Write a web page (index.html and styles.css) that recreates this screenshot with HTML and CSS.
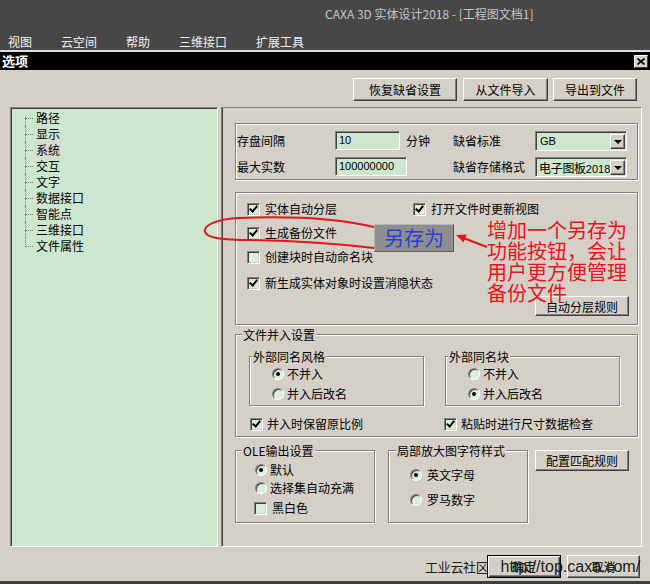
FILE: index.html
```html
<!DOCTYPE html>
<html lang="zh-CN">
<head>
<meta charset="utf-8">
<title>选项</title>
<link rel="stylesheet" href="styles.css">
</head>
<body>
<div class="screen">
  <header class="appbar">
    <div class="apptitle">CAXA 3D 实体设计2018 - [工程图文档1]</div>
    <nav class="menu"><span>视图</span><span>云空间</span><span>帮助</span><span>三维接口</span><span>扩展工具</span></nav>
  </header>

  <div class="dialog">
    <div class="dlg-title">
      <span class="dlg-name">选项</span>
      <span class="close-btn"><svg width="8" height="7" viewBox="0 0 8 7"><path d="M0.5 0.5 L7.5 6.5 M7.5 0.5 L0.5 6.5" stroke="#000" stroke-width="1.6" fill="none"/></svg></span>
    </div>
    <div class="dlg-body">
      <div class="toolbar">
        <button class="btn b-restore">恢复缺省设置</button>
        <button class="btn b-import">从文件导入</button>
        <button class="btn b-export">导出到文件</button>
      </div>

      <div class="main">
        <div class="tree">
          <ul class="tree-list">
            <li>路径</li>
            <li>显示</li>
            <li><span class="sel">系统</span></li>
            <li>交互</li>
            <li>文字</li>
            <li>数据接口</li>
            <li>智能点</li>
            <li>三维接口</li>
            <li>文件属性</li>
          </ul>
        </div>

        <div class="page">
          <div class="grp g-basic">
            <span>存盘间隔</span>
            <span class="field f-short">10</span>
            <span>分钟</span>
            <span>缺省标准</span>
            <span class="combo"><span class="combo-val latin">GB</span><span class="combo-arrow"></span></span>
            <span>最大实数</span>
            <span class="field f-long">100000000</span>
            <span></span>
            <span>缺省存储格式</span>
            <span class="combo"><span class="combo-val">电子图板<span class="digits">2018</span></span><span class="combo-arrow"></span></span>
          </div>

          <div class="grp g-checks">
            <div class="chk"><span class="box on"></span><span>实体自动分层</span></div>
            <div class="chk"><span class="box on"></span><span>打开文件时更新视图</span></div>
            <div class="chk span"><span class="box on"></span><span>生成备份文件</span></div>
            <div class="chk span"><span class="box"></span><span>创建块时自动命名块</span></div>
            <div class="chk span chk-last"><span class="box on"></span><span>新生成实体对象时设置消隐状态</span></div>
            <button class="btn btn-rule span">自动分层规则</button>
          </div>

          <div class="grp g-merge">
            <div class="lg">文件并入设置</div>
            <div class="subs">
              <div class="grp sub">
                <div class="lg">外部同名风格</div>
                <div class="opts">
                  <div class="rad"><span class="dot on"></span><span>不并入</span></div>
                  <div class="rad"><span class="dot"></span><span>并入后改名</span></div>
                </div>
              </div>
              <div class="grp sub">
                <div class="lg">外部同名块</div>
                <div class="opts">
                  <div class="rad"><span class="dot"></span><span>不并入</span></div>
                  <div class="rad"><span class="dot on"></span><span>并入后改名</span></div>
                </div>
              </div>
            </div>
            <div class="merge-checks">
              <div class="chk"><span class="box on"></span><span>并入时保留原比例</span></div>
              <div class="chk"><span class="box on"></span><span>粘贴时进行尺寸数据检查</span></div>
            </div>
          </div>

          <div class="bottom-row">
            <div class="grp g-ole">
              <div class="lg">OLE输出设置</div>
              <div class="opts">
                <div class="rad"><span class="dot on"></span><span>默认</span></div>
                <div class="rad"><span class="dot"></span><span>选择集自动充满</span></div>
                <div class="chk"><span class="box"></span><span>黑白色</span></div>
              </div>
            </div>
            <div class="grp g-zoom">
              <div class="lg">局部放大图字符样式</div>
              <div class="opts">
                <div class="rad"><span class="dot on"></span><span>英文字母</span></div>
                <div class="rad"><span class="dot"></span><span>罗马数字</span></div>
              </div>
            </div>
            <button class="btn btn-match">配置匹配规则</button>
          </div>
        </div>
      </div>

      <div class="footer">
        <button class="btn b-ok">确定</button>
        <button class="btn b-cancel">取消</button>
      </div>
    </div>
  </div>

  <svg class="note-marks" width="650" height="584" viewBox="0 0 650 584">
    <path d="M374 227 C340 219 290 216 240 218 C215 219 203 226 205 232 C207 238 222 240 250 240 C300 241 340 244 374 248" fill="none" stroke="#e3151c" stroke-width="2" stroke-linecap="round"/>
    <line x1="487" y1="247" x2="462" y2="237.5" stroke="#e3151c" stroke-width="2"/>
    <polygon points="456,235 466.7,234.4 463.6,242.6" fill="#e3151c"/>
  </svg>
  <div class="note-saveas">另存为</div>
  <div class="note-text">增加一个另存为<br>功能按钮，会让<br>用户更方便管理<br>备份文件</div>
  <div class="watermark"><span class="wm-cn">工业云社区</span><span class="wm-url">http://top.caxa.com/</span></div>
</div>
</body>
</html>
```

FILE: styles.css
```css
* { box-sizing: border-box; }
html, body { margin: 0; padding: 0; }
body {
  width: 650px;
  height: 584px;
  overflow: hidden;
  background: #d4d0c8;
  font-family: "Noto Sans CJK SC", "Noto Sans", sans-serif;
  font-size: 12px;
  line-height: 16px;
  color: #000;
}
.screen { position: relative; width: 650px; height: 584px; overflow: hidden; }

/* application bar */
.appbar { height: 50px; background: #474747; padding-top: 6px; }
.apptitle { height: 16px; padding-left: 325px; color: #c6c6c6; white-space: nowrap; }
.menu { display: flex; gap: 29px; margin-top: 12px; padding-left: 8px; color: #f2f2f2; }

/* dialog */
.dialog { border-top: 2px solid #dcdcdc; border-bottom: 3px solid #404040; }
.dlg-title {
  height: 18px; background: #000;
  display: flex; align-items: center; justify-content: space-between;
  padding: 0 2px;
}
.dlg-name { color: #fff; font-weight: 700; font-size: 13px; line-height: 18px; }
.close-btn {
  width: 14px; height: 13px; background: #d4d0c8;
  border: 1px solid; border-color: #fff #404040 #404040 #fff;
  display: flex; align-items: center; justify-content: center;
}
.dlg-body {
  height: 511px;
  padding: 8px 8px 3px 10px;
  display: flex; flex-direction: column;
}

/* buttons */
.btn {
  font: inherit; font-size: 12px; color: #000;
  background: #d4d0c8;
  border: 1px solid; border-color: #fff #404040 #404040 #fff;
  box-shadow: inset -1px -1px 0 #808080;
  padding: 0; height: 23px; line-height: 19px; text-align: center;
}
.toolbar { display: flex; justify-content: flex-end; gap: 5px; height: 23px; padding-right: 5px; }
.b-restore { width: 104px; margin-right: 1px; }
.b-import { width: 85px; }
.b-export { width: 84px; }

.main { display: flex; gap: 3px; height: 440px; margin-top: 6px; }

/* tree */
.tree {
  width: 208px; background: #cde7cf;
  border: 1px solid; border-color: #808080 #fff #fff #808080;
  box-shadow: inset 1px 1px 0 #404040;
}
.tree-list { list-style: none; margin: 0; padding: 2px 0 0 0; }
.tree-list li { position: relative; height: 16px; padding-left: 25px; white-space: nowrap; }
.tree-list li::before {
  content: ""; position: absolute; left: 14px; top: 8px; width: 8px;
  border-top: 1px dotted #7a7a7a;
}
.tree-list li::after {
  content: ""; position: absolute; left: 14px; top: 0; height: 16px;
  border-left: 1px dotted #7a7a7a;
}
.tree-list li:first-child::after { top: 7px; height: 9px; }
.tree-list li:last-child::after { height: 9px; }
.sel { background: #d9d9d2; padding: 0 1px; margin-left: -1px; }

/* property page */
.page {
  flex: 1;
  border: 1px solid; border-color: #808080 #fff #fff #808080;
  box-shadow: inset 1px 0 0 #404040;
  padding: 15px 3px 0 13px;
}
.grp { border: 1px solid #808080; box-shadow: inset 1px 1px 0 #fff, 1px 1px 0 #fff; }
.lg {
  width: max-content; height: 15px; line-height: 15px;
  margin: -8px 0 0 6px; padding: 0 1px;
  background: #d4d0c8; white-space: nowrap;
}

.g-basic {
  display: grid;
  grid-template-columns: 98px 71px 47px 82px 92px;
  grid-template-rows: 19px 19px;
  row-gap: 7px;
  align-items: center;
  padding: 7px 0 3px 1px;
  white-space: nowrap;
}
.field {
  height: 19px; background: #cde7cf;
  border: 1px solid; border-color: #808080 #fff #fff #808080;
  box-shadow: inset 1px 1px 0 #404040;
  font-family: "Liberation Sans", sans-serif; font-size: 11px; line-height: 17px;
  padding-left: 3px;
}
.f-short { width: 65px; }
.f-long { width: 72px; }
.combo {
  display: flex; height: 20px; width: 92px; background: #cde7cf;
  border: 1px solid; border-color: #808080 #fff #fff #808080;
  box-shadow: inset 1px 1px 0 #404040;
  padding: 2px 1px 1px 2px;
}
.combo-val { flex: 1; padding-left: 1px; line-height: 15px; white-space: nowrap; overflow: hidden; letter-spacing: -0.3px; }
.digits { font-family: "Liberation Sans", sans-serif; font-size: 11px; letter-spacing: 0; }
.latin { font-family: "Liberation Sans", sans-serif; font-size: 11px; letter-spacing: 0; padding-left: 2px; }
.combo-arrow {
  width: 15px; height: 15px; flex: none; background: #d4d0c8;
  border: 1px solid; border-color: #fff #404040 #404040 #fff;
  box-shadow: inset -1px -1px 0 #808080;
  display: flex; align-items: center; justify-content: center;
}
.combo-arrow::after {
  content: ""; border-left: 4px solid transparent; border-right: 4px solid transparent;
  border-top: 4px solid #000; margin-top: 1px;
}

/* check boxes & radios */
.chk, .rad { display: flex; align-items: center; height: 16px; white-space: nowrap; }
.chk { gap: 5px; }
.rad { gap: 3px; }
.box {
  width: 13px; height: 13px; flex: none; background: #dbeedb;
  border: 1px solid; border-color: #808080 #fff #fff #808080;
  box-shadow: inset 1px 1px 0 #404040, inset -1px -1px 0 #d4d0c8;
  display: flex; align-items: center; justify-content: center;
}
.box.on::after {
  content: ""; width: 3px; height: 6px;
  border: solid #000; border-width: 0 2px 2px 0;
  transform: rotate(40deg); margin-top: -2px;
}
.dot {
  width: 12px; height: 12px; flex: none; border-radius: 50%; background: #dbeedb;
  border: 1px solid; border-color: #808080 #fff #fff #808080;
  box-shadow: inset 1px 1px 0 #404040;
  display: flex; align-items: center; justify-content: center;
}
.dot.on::after { content: ""; width: 4px; height: 4px; border-radius: 50%; background: #000; }

.g-checks {
  margin-top: 12px;
  padding: 8px 8px 8px 11px;
  display: grid;
  grid-template-columns: 166px 1fr;
  row-gap: 8px;
}
.g-checks .span { grid-column: 1 / -1; }
.g-checks .chk-last { margin-top: 2px; }
.btn-rule { justify-self: end; width: 94px; height: 20px; line-height: 17px; margin-top: -3px; }

.g-merge { margin-top: 9px; padding-bottom: 4px; }
.subs { display: flex; gap: 21px; margin: 14px 0 0 13px; }
.sub { width: 175px; }
.sub .lg { margin-left: 2px; }
.sub .opts { display: flex; flex-direction: column; gap: 4px; padding: 2px 0 3px 22px; }
.merge-checks { display: grid; grid-template-columns: 194px auto; margin: 10px 0 0 14px; }
.merge-checks .chk { gap: 4px; }

.bottom-row { display: flex; align-items: flex-start; margin-top: 13px; }
.g-ole { width: 140px; height: 73px; }
.g-ole .opts { display: flex; flex-direction: column; padding: 4px 0 0 19px; }
.g-ole .opts > :nth-child(2) { margin-top: 2px; }
.g-ole .opts > :nth-child(3) { margin-top: 4px; margin-left: -1px; }
.g-zoom { width: 140px; height: 73px; margin-left: 13px; }
.g-zoom .lg { margin-left: 7px; }
.g-zoom .opts { display: flex; flex-direction: column; gap: 9px; padding: 9px 0 0 21px; }
.g-zoom .rad { gap: 5px; }
.btn-match { width: 94px; height: 21px; line-height: 18px; margin-left: 7px; }

/* footer */
.footer { display: flex; justify-content: flex-end; gap: 6px; margin-top: 8px; padding-right: 2px; }
.b-ok {
  width: 74px; border: 1px solid #000;
  box-shadow: inset 1px 1px 0 #fff, inset -1px -1px 0 #404040, inset -2px -2px 0 #808080;
}
.b-cancel { width: 73px; }

/* annotations laid over the screenshot */
.note-marks { position: absolute; left: 0; top: 0; pointer-events: none; }
.note-saveas {
  position: absolute; left: 374px; top: 224px; width: 80px; height: 28px;
  background: #8e8e8e;
  border: 1px solid; border-color: #b4b4b4 #5a5a5a #5a5a5a #b4b4b4;
  color: #2940d8; font-size: 20px; line-height: 25px; text-align: center;
}
.note-text {
  position: absolute; left: 487px; top: 219px;
  color: #e8131b; font-size: 20px; line-height: 21px; white-space: nowrap;
}
.watermark {
  position: absolute; left: 425px; top: 557px; height: 20px;
  color: #1c1c1c; white-space: nowrap; line-height: 20px;
  display: flex; align-items: baseline;
}
.wm-cn { font-size: 13px; letter-spacing: -0.3px; }
.wm-url { font-family: "Liberation Sans", sans-serif; font-size: 16px; margin-left: 12px; }
```
